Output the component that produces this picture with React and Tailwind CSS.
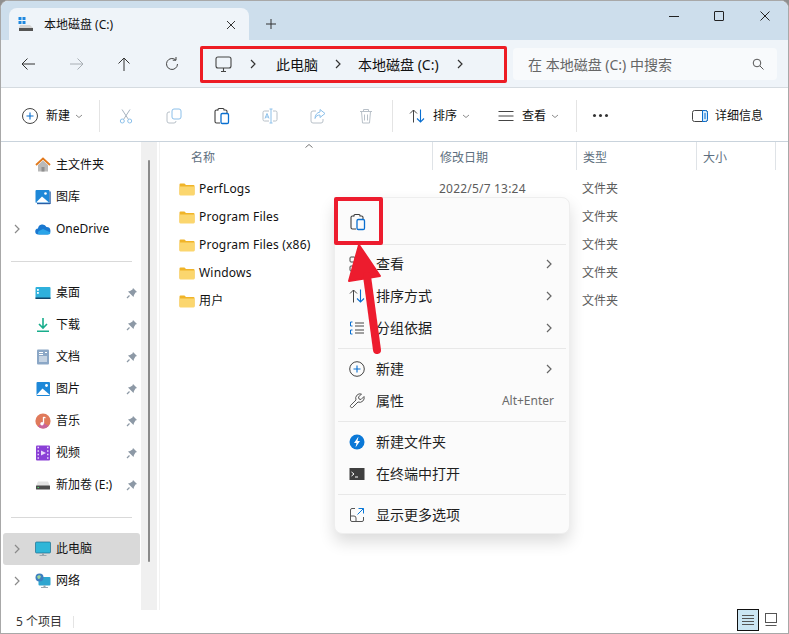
import React from "react";

const I = ({ s = 16, v = "0 0 16 16", c = "", children }) => (
  <svg width={s} height={s} viewBox={v} fill="none" className={"shrink-0 " + c}>{children}</svg>
);

const Folder = () => (
  <I s={16}>
    <path d="M0.5 3.5a1 1 0 0 1 1-1h4l1.5 1.5h7.5a1 1 0 0 1 1 1v8a1 1 0 0 1-1 1h-13a1 1 0 0 1-1-1z" fill="#f0b429" />
    <path d="M0.5 5.5h15v8a1 1 0 0 1-1 1h-13a1 1 0 0 1-1-1z" fill="#fbd66e" />
  </I>
);
const Chev = ({ c = "#8a8a8a" }) => (
  <I s={10} v="0 0 10 10"><path d="M3 1l4 4-4 4" stroke={c} strokeWidth="1.2" /></I>
);
const Down = () => (
  <I s={8} v="0 0 8 8"><path d="M1 3l3 2.5L7 3" stroke="#8c8c8c" strokeWidth="1" /></I>
);
const Pin = () => (
  <I s={12} v="0 0 12 12">
    <path d="M7 1l4 4-1.5.5L8 8 7.5 10 2 4.500 4 4l2.500-1.500z" fill="#8d99a6" />
    <path d="M3.500 8.500L1 11" stroke="#8d99a6" strokeWidth="1.2" />
  </I>
);
const Paste = ({ s = 18, dark = "#3c3c3c" }) => (
  <I s={s} v="0 0 18 18">
    <path d="M5 3H3.500A1.500 1.500 0 0 0 2 4.500v10A1.500 1.500 0 0 0 3.500 16H7" stroke={dark} strokeWidth="1.1" />
    <path d="M5 3.500V2.500A1 1 0 0 1 6 1.500h4a1 1 0 0 1 1 1v1M11 3h1.500A1.500 1.500 0 0 1 14 4.500V6" stroke={dark} strokeWidth="1.1" />
    <rect x="8" y="6.500" width="7.500" height="10" rx="1.300" stroke="#0a6fd0" strokeWidth="1.300" />
  </I>
);

const icons = {
  home: (
    <I>
      <path d="M1 8l7-6.500L15 8" stroke="#e2791c" strokeWidth="1.800" />
      <path d="M3 8l5-4.500L13 8v6.500H3z" fill="#b9b9b9" />
      <rect x="6.500" y="10" width="3" height="4.500" fill="#8f8f8f" />
    </I>
  ),
  gallery: (
    <I>
      <rect x="0.500" y="1" width="14" height="13" rx="1" fill="#1e88d8" />
      <rect x="14.500" y="2.500" width="1.200" height="12.500" fill="#2a5ea5" />
      <rect x="2" y="14" width="13" height="1.200" fill="#2a5ea5" />
      <path d="M1 13.500l6-6 7 6z" fill="#fff" />
      <circle cx="10.500" cy="4.500" r="1.300" fill="#fff" />
    </I>
  ),
  cloud: (
    <I>
      <path d="M3.500 13.500a3 3 0 0 1-.5-6A4.500 4.500 0 0 1 11.500 6a3.800 3.800 0 0 1 1 7.500z" fill="#1a78d0" />
      <path d="M4 13.500a2 2 0 0 1 0-3.500l4-2 7.500 3.500a2.200 2.200 0 0 1-2 2z" fill="#2aa4e8" />
    </I>
  ),
  desktop: (
    <I>
      <rect x="0.500" y="2" width="15" height="12" rx="1" fill="#2eb0dc" />
      <rect x="0.500" y="12.500" width="15" height="1.500" fill="#11466b" />
      <rect x="2" y="4" width="1.800" height="1.800" fill="#fff" />
      <rect x="2" y="7" width="1.800" height="1.800" fill="#fff" />
    </I>
  ),
  download: (
    <I>
      <path d="M8 1v9.500M4 7l4 4 4-4" stroke="#18ad8c" strokeWidth="1.600" />
      <rect x="2" y="13.500" width="12" height="1.500" fill="#18ad8c" />
    </I>
  ),
  docs: (
    <I>
      <rect x="2" y="0.500" width="12" height="15" rx="1" fill="#8ba7c6" />
      <path d="M4 3.500h4M4 5.500h4M10 3.500h2M4 8h8M4 10h8M4 12h8" stroke="#fff" strokeWidth="1" />
    </I>
  ),
  pics: (
    <I>
      <rect x="1.500" y="1" width="13.500" height="14" rx="1" fill="#1e88d8" />
      <path d="M1.500 14l6-6.500L15 14z" fill="#fff" />
      <circle cx="11.500" cy="4.500" r="1.400" fill="#fff" />
    </I>
  ),
  music: (
    <I>
      <circle cx="8" cy="8" r="7.600" fill="#e07a5b" />
      <path d="M8 8A7.600 7.600 0 0 0 14 12.600 7.600 7.600 0 0 1 3 13.600z" fill="#c9669a" />
      <path d="M8.500 4v6.500" stroke="#fff" strokeWidth="1.300" />
      <circle cx="7" cy="10.800" r="1.700" fill="#fff" />
      <path d="M8.500 4l2 1" stroke="#fff" strokeWidth="1.300" />
    </I>
  ),
  video: (
    <I>
      <rect x="1" y="0.500" width="14" height="15" rx="1" fill="#8a3fd6" />
      <path d="M6 5.500l5 2.500-5 2.500z" fill="#e8d8fa" />
      <path d="M2.500 2.500h1.500M2.500 6h1.500M2.500 9.500h1.500M2.500 13h1.500M12 2.500h1.500M12 6h1.500M12 9.500h1.500M12 13h1.500" stroke="#e8d8fa" strokeWidth="1.300" />
    </I>
  ),
  drive: (
    <I>
      <path d="M3 4.500h10l2 4.500H1z" fill="#e3e3e3" />
      <rect x="1" y="8.500" width="14" height="4" rx="0.500" fill="#4c4c4c" />
      <rect x="2.500" y="10" width="1.500" height="1" fill="#52d36a" />
    </I>
  ),
  pc: (
    <I>
      <rect x="0.500" y="1" width="15" height="11" rx="1" fill="#2fb6d8" stroke="#1d6f8f" strokeWidth="0.700" />
      <rect x="7" y="12" width="2" height="2" fill="#9aa7b0" />
      <rect x="4.500" y="14" width="7" height="1" fill="#9aa7b0" />
    </I>
  ),
  net: (
    <I>
      <rect x="3.500" y="4" width="12" height="8.500" rx="1" fill="#2fa6d0" />
      <rect x="8.500" y="12.500" width="2" height="2" fill="#9aa7b0" />
      <rect x="6" y="14" width="7" height="1" fill="#9aa7b0" />
      <circle cx="4.500" cy="4.500" r="4" fill="#3d7fc0" />
      <path d="M2 3.500l2-1.500 2 1-1 2.500-2 .5z" fill="#9cd59a" />
    </I>
  ),
};

const navTop = [["home", "主文件夹"], ["gallery", "图库"], ["cloud", "OneDrive", true]];
const navPinned = [["desktop", "桌面"], ["download", "下载"], ["docs", "文档"], ["pics", "图片"], ["music", "音乐"], ["video", "视频"], ["drive", "新加卷 (E:)"]];

const NavRow = ({ icon, label, chev, pin, active }) => (
  <div className={"h-8 flex items-center rounded-[3px] " + (active ? "bg-[#d9d9d9]" : "")}>
    <span className="w-[32px] pl-[9px] flex shrink-0">{chev && <Chev />}</span>
    {icons[icon]}
    <span className="ml-[5px] flex-1 text-[12px] text-[#111] whitespace-nowrap">{label}</span>
    {pin && <span className="mr-[2px] flex"><Pin /></span>}
  </div>
);

const Sep = () => <div className="h-px bg-[#d9d9d9] ml-[8px] mr-[8px]" />;

const files = [
  ["PerfLogs", "2022/5/7 13:24"],
  ["Program Files", ""],
  ["Program Files (x86)", ""],
  ["Windows", ""],
  ["用户", ""],
];

const Gray = ({ children }) => <span className="w-[48px] flex justify-center">{children}</span>;

const MenuItem = ({ icon, label, chev, hint }) => (
  <div className="h-8 flex items-center pl-[14px] pr-[15px]">
    <span className="w-[27px] flex shrink-0">{icon}</span>
    <span className="flex-1 text-[14px] text-[#1f1f1f] pb-[2px]">{label}</span>
    {chev && <Chev c="#666" />}
    {hint && <span className="text-[12px] text-[#6b6b6b]">{hint}</span>}
  </div>
);

const MSep = () => <div className="h-px bg-[#e8e8e8] mx-[3px]" />;

const marks = [
  [10, 60], [160, 50], [330, 50], [510, 60], [660, 55],
  [10, 190], [160, 175], [330, 190], [510, 180], [660, 185],
  [10, 320], [180, 310], [350, 320], [520, 300], [660, 320],
  [20, 460], [190, 450], [360, 440], [520, 440], [660, 450],
  [20, 570], [190, 570], [360, 570], [520, 570], [660, 570],
];

export default function App() {
  return (
    <div className="relative w-[789px] h-[634px] overflow-hidden bg-[#8f8f8f] font-['Noto_Sans','Noto_Sans_CJK_SC',sans-serif]">
      <div className="w-full h-full flex flex-col rounded-t-[8px] overflow-hidden bg-white border-l border-t border-r border-b border-[#a8a8a8]">
        {/* title bar */}
        <div className="h-[39px] shrink-0 bg-[#cddeec] flex items-end pl-[8px]">
          <div className="w-[240px] h-[32px] bg-[#eff4f9] rounded-t-[8px] flex items-center pl-[9px] pr-[13px] pt-[1px]">
            <I s={16}>
              <rect x="0.500" y="0" width="3" height="3" fill="#1e88e0" /><rect x="4.500" y="0" width="3" height="3" fill="#1e88e0" />
              <rect x="0.500" y="4" width="3" height="3" fill="#1e88e0" /><rect x="4.500" y="4" width="3" height="3" fill="#1e88e0" />
              <path d="M2 8h10l3 3v2H1v-2z" fill="#d4d4d4" />
              <rect x="1" y="11" width="14" height="3" fill="#555" />
            </I>
            <span className="ml-[10px] flex-1 text-[12px] text-[#111]">本地磁盘 (C:)</span>
            <I s={10} v="0 0 10 10"><path d="M1 1l8 8M9 1l-8 8" stroke="#333" strokeWidth="1" /></I>
          </div>
          <div className="h-[32px] ml-[16px] flex items-center">
            <I s={12} v="0 0 12 12"><path d="M6 1v10M1 6h10" stroke="#333" strokeWidth="1" /></I>
          </div>
          <div className="flex-1" />
          <div className="self-start flex items-center h-[30px] pr-[18px]">
            <span className="w-[10px] h-px bg-[#222] mr-[35px]" />
            <span className="w-[10px] h-[10px] border border-[#222] rounded-[1px] mr-[36px]" />
            <I s={10} v="0 0 10 10"><path d="M0.500 0.500l9 9M9.500 0.500l-9 9" stroke="#222" strokeWidth="1" /></I>
          </div>
        </div>
        {/* address */}
        <div className="h-[48px] shrink-0 bg-[#eff4f9] border-b border-[#d5dbe0] flex items-center pt-[1px]">
          <div className="flex items-center w-[199px] shrink-0">
            <span className="w-[53px] pl-[19px] flex">
              <I><path d="M15 8H2M7.500 2.500L2 8l5.500 5.500" stroke="#333" strokeWidth="1" /></I>
            </span>
            <span className="w-[47px] pl-[15px] flex">
              <I><path d="M1 8h13M8.500 2.500L14 8l-5.500 5.500" stroke="#a8aeb4" strokeWidth="1" /></I>
            </span>
            <span className="w-[48px] pl-[15px] flex">
              <I><path d="M8 15V2M2.500 7.500L8 2l5.500 5.500" stroke="#333" strokeWidth="1" /></I>
            </span>
            <span className="w-[48px] pl-[15px] flex">
              <I><path d="M13.500 8a5.500 5.500 0 1 1-1.700-4M12 1v3.200H8.800" stroke="#444" strokeWidth="1" /></I>
            </span>
          </div>
          <div className="w-[307px] h-[37px] shrink-0 border-[3px] border-[#ed1c24] rounded-[2px] flex items-center pl-[12px] text-[14px] text-[#111]">
            <I s={17} v="0 0 17 17"><rect x="1" y="1" width="15" height="11" rx="2" stroke="#444" strokeWidth="1.100" /><path d="M6 15.500h5M8.500 12v3" stroke="#444" strokeWidth="1.100" /></I>
            <span className="ml-[16px] flex"><Chev c="#333" /></span>
            <span className="ml-[18px]">此电脑</span>
            <span className="ml-[15px] flex"><Chev c="#333" /></span>
            <span className="ml-[15px] whitespace-nowrap">本地磁盘 (C:)</span>
            <span className="ml-[16px] flex"><Chev c="#333" /></span>
          </div>
          <div className="ml-[6px] w-[264px] h-[32px] bg-[#f8fafc] rounded-[4px] flex items-center pl-[15px] pr-[13px]">
            <span className="flex-1 text-[14px] text-[#666]">在 本地磁盘 (C:) 中搜索</span>
            <I s={12} v="0 0 12 12"><circle cx="5" cy="5" r="3.800" stroke="#555" strokeWidth="1" /><path d="M8 8l3.500 3.500" stroke="#555" strokeWidth="1" /></I>
          </div>
        </div>
        {/* toolbar */}
        <div className="h-[54px] shrink-0 bg-white border-b border-[#c9d3dc] flex items-center pt-[2px]">
          <div className="w-[98px] pl-[21px] flex items-center shrink-0">
            <I s={16}><circle cx="8" cy="8" r="7.500" stroke="#444" strokeWidth="1" /><path d="M8 4.500v7M4.500 8h7" stroke="#0a6fd0" strokeWidth="1.100" /></I>
            <span className="ml-[8px] text-[12px] text-[#111]">新建</span>
            <span className="ml-[5px] flex"><Down /></span>
          </div>
          <span className="w-px h-[32px] bg-[#e4e4e4] mr-[2px] shrink-0" />
          <Gray>
            <I><path d="M4 1.500l6.500 10M12 1.500L5.500 11.500" stroke="#a8b4c0" strokeWidth="1" /><circle cx="4.300" cy="13" r="2" stroke="#8cc0ea" /><circle cx="11.700" cy="13" r="2" stroke="#8cc0ea" /></I>
          </Gray>
          <Gray>
            <I><rect x="6" y="1" width="9" height="10" rx="2" stroke="#8cc0ea" /><path d="M4 4H3a2 2 0 0 0-2 2v7a2 2 0 0 0 2 2h5a2 2 0 0 0 2-2" stroke="#b8c0c8" /></I>
          </Gray>
          <Gray><Paste s={18} /></Gray>
          <Gray>
            <I><path d="M7 3H2.500A1.500 1.500 0 0 0 1 4.500v7A1.500 1.500 0 0 0 2.500 13H7M11 3h2.500A1.500 1.500 0 0 1 15 4.500v7a1.500 1.500 0 0 1-1.500 1.500H11" stroke="#b8c0c8" /><path d="M7.500 1h3M9 1v14M7.500 15h3" stroke="#8cc0ea" /><path d="M3 10.500l2-5 2 5M3.700 9h2.600" stroke="#8cc0ea" /></I>
          </Gray>
          <Gray>
            <I><path d="M6 3H3a2 2 0 0 0-2 2v8a2 2 0 0 0 2 2h8a2 2 0 0 0 2-2v-2" stroke="#b8c0c8" /><path d="M10 1.500l5 4-5 4V7C7.500 7 6 8 5 10.500 5 7 7 4.500 10 4z" stroke="#8cc0ea" /></I>
          </Gray>
          <Gray>
            <I><path d="M2 3.500h12M5.500 3.500V1.500h5v2M3.500 3.500L4.500 15h7l1-11.500M6.500 6.500v6M9.500 6.500v6" stroke="#b8c0c8" /></I>
          </Gray>
          <span className="w-px h-[32px] bg-[#e4e4e4] ml-[2px] shrink-0" />
          <div className="ml-[16px] flex items-center">
            <I><path d="M4.500 14.500V2M1 5.500L4.500 2 8 5.500" stroke="#444" strokeWidth="1" /><path d="M11.500 1.500V14M8 10.500l3.500 3.500 3.500-3.500" stroke="#0a6fd0" strokeWidth="1.100" /></I>
            <span className="ml-[8px] text-[12px] text-[#111]">排序</span>
            <span className="ml-[5px] flex"><Down /></span>
          </div>
          <div className="ml-[28px] flex items-center">
            <I><path d="M0.500 3.500h15M0.500 8h15M0.500 12.500h15" stroke="#444" strokeWidth="1" /></I>
            <span className="ml-[8px] text-[12px] text-[#111]">查看</span>
            <span className="ml-[5px] flex"><Down /></span>
          </div>
          <span className="w-px h-[32px] bg-[#e4e4e4] ml-[17px] shrink-0" />
          <div className="ml-[16px] flex gap-[3px] items-center">
            <span className="w-[3px] h-[3px] rounded-full bg-[#333]" />
            <span className="w-[3px] h-[3px] rounded-full bg-[#333]" />
            <span className="w-[3px] h-[3px] rounded-full bg-[#333]" />
          </div>
          <div className="ml-auto pr-[25px] flex items-center">
            <I><rect x="0.500" y="2.500" width="15" height="11" rx="2" stroke="#444" strokeWidth="1" /><path d="M10.500 2.500h3a2 2 0 0 1 2 2v7a2 2 0 0 1-2 2h-3z" fill="#d7ebfa" stroke="#0a6fd0" /><path d="M12 6h2M12 8h2M12 10h2" stroke="#0a6fd0" /></I>
            <span className="ml-[7px] text-[12px] text-[#111]">详细信息</span>
          </div>
        </div>
        {/* main */}
        <div className="flex-1 flex min-h-0 bg-white">
          <div className="w-[140px] shrink-0 pt-[7px] pl-[2px] pr-[1px]">
            {navTop.map(([i, l, c]) => <NavRow key={l} icon={i} label={l} chev={c} />)}
            <div className="h-[32px] flex items-center"><div className="flex-1"><Sep /></div></div>
            {navPinned.map(([i, l]) => <NavRow key={l} icon={i} label={l} pin />)}
            <div className="h-[32px] flex items-center"><div className="flex-1"><Sep /></div></div>
            <NavRow icon="pc" label="此电脑" chev active />
            <NavRow icon="net" label="网络" chev />
          </div>
          <div className="w-[16px] shrink-0 bg-[#f0f0f0] relative">
            <div className="absolute left-[7px] top-[18px] w-[2px] h-[402px] bg-[#8a8a8a] rounded-full" />
          </div>
          <div className="flex-1 min-w-0 border-l border-[#f2f2f2] ml-[2px]">
            <div className="h-[33px] flex text-[12px] text-[#5e6f80] relative">
              <span className="w-[272px] pl-[31px] pt-[7px] shrink-0">名称</span>
              <span className="w-[144px] pl-[7px] pt-[7px] shrink-0 h-[28px] border-l border-[#dfe3e7]">修改日期</span>
              <span className="w-[120px] pl-[6px] pt-[7px] shrink-0 h-[28px] border-l border-[#dfe3e7]">类型</span>
              <span className="w-[80px] pl-[6px] pt-[7px] shrink-0 h-[28px] border-x border-[#dfe3e7]">大小</span>
              <span className="absolute left-[144px] top-0"><I s={10} v="0 0 10 10"><path d="M1.500 5.500L5 2.500l3.500 3" stroke="#777" strokeWidth="1" /></I></span>
            </div>
            {files.map(([n, d]) => (
              <div key={n} className="h-[28px] flex items-center text-[12px] text-[#111]">
                <span className="w-[272px] pl-[19px] flex items-center shrink-0">
                  <Folder />
                  <span className="ml-[4px] whitespace-nowrap tracking-[0.2px]">{n}</span>
                </span>
                <span className="w-[144px] pl-[7px] shrink-0 text-[#5c5c5c] whitespace-nowrap tracking-[0.2px]">{d}</span>
                <span className="pl-[6px] text-[#5c5c5c]">文件夹</span>
              </div>
            ))}
          </div>
        </div>
        {/* status */}
        <div className="h-[23px] shrink-0 bg-white flex items-center pl-[15px] pr-[10px] relative">
          <span className="text-[12px] text-[#333]">5 个项目</span>
          <span className="ml-[11px] w-px h-[12px] bg-[#e4e4e4]" />
          <div className="ml-auto flex items-center gap-[5px] self-start -mt-px">
            <span className="w-[22px] h-[22px] bg-[#cbe6f4] border border-[#111] flex items-center justify-center">
              <I s={14} v="0 0 14 14"><path d="M1 2.500h12M1 5.500h12M1 8.500h12M1 11.500h12" stroke="#555" strokeWidth="1" /></I>
            </span>
            <I s={14} v="0 0 14 14"><rect x="1.500" y="0.500" width="11" height="9" stroke="#555" /><path d="M1.500 12.500h11" stroke="#555" /></I>
          </div>
        </div>
      </div>

      {/* context menu */}
      <div className="absolute left-[334px] top-[197px] w-[236px] h-[337px] bg-[#fbfbfb] rounded-[8px] border border-[#eeeeee] shadow-[0_8px_16px_rgba(0,0,0,0.14)]">
        <div className="h-[46px] flex items-center pl-[14px] pt-[2px]"><Paste /></div>
        <MSep />
        <div className="h-[3px]" />
        <MenuItem label="查看" chev icon={<I><rect x="1" y="1" width="5" height="5" rx="1" stroke="#444" /><rect x="1" y="10" width="5" height="5" rx="1" stroke="#444" /><rect x="10" y="10" width="5" height="5" rx="1" stroke="#0a6fd0" /></I>} />
        <MenuItem label="排序方式" chev icon={<I><path d="M4.500 14.500V2M1 5.500L4.500 2 8 5.500" stroke="#444" strokeWidth="1" /><path d="M11.500 1.500V14M8 10.500l3.500 3.500 3.500-3.500" stroke="#0a6fd0" strokeWidth="1.100" /></I>} />
        <MenuItem label="分组依据" chev icon={<I><path d="M3.500 2H1.500v4h2M3.500 10H1.500v4h2" stroke="#0a6fd0" /><path d="M6 3h9M6 6h9M6 10h9M6 13h9" stroke="#444" /></I>} />
        <div className="h-[4px]" />
        <MSep />
        <div className="h-[4px]" />
        <MenuItem label="新建" chev icon={<I><circle cx="8" cy="8" r="7.300" stroke="#444" strokeWidth="1" /><path d="M8 4.500v7M4.500 8h7" stroke="#0a6fd0" strokeWidth="1.100" /></I>} />
        <MenuItem label="属性" hint="Alt+Enter" icon={<I><path d="M15 3.500l-3 3-2-.5-.5-2 3-3a4.500 4.500 0 0 0-5.500 6L1.500 12.500a1.500 1.500 0 0 0 2 2L9 9a4.500 4.500 0 0 0 6-5.500z" stroke="#555" strokeWidth="1" /></I>} />
        <div className="h-[4px]" />
        <MSep />
        <div className="h-[4px]" />
        <MenuItem label="新建文件夹" icon={<I><circle cx="8" cy="8" r="7.500" fill="#0a78d7" /><path d="M9.500 2.500L5 9h2.500L6.500 13.500 11 7H8.500z" fill="#fff" /></I>} />
        <MenuItem label="在终端中打开" icon={<I><rect x="0.500" y="2" width="15" height="12" fill="#3f3f3f" /><path d="M2.500 6l2.500 2-2.500 2M6 11h3" stroke="#fff" strokeWidth="1" /></I>} />
        <div className="h-[4px]" />
        <MSep />
        <div className="h-[4px]" />
        <MenuItem label="显示更多选项" icon={<I><path d="M6 1.500H3A1.500 1.500 0 0 0 1.500 3v10A1.500 1.500 0 0 0 3 14.500h10a1.500 1.500 0 0 0 1.500-1.500v-3M1.500 9H5a2 2 0 0 1 2 2v3.500" stroke="#555" /><path d="M9.500 1.500h5v5M14.500 1.500L8.500 7.500" stroke="#0a78d7" /></I>} />
      </div>

      {/* red annotations */}
      <div className="absolute left-[334px] top-[197px] w-[49px] h-[48px] border-[4px] border-[#ed1c2e] rounded-[2px]" />
      <svg className="absolute left-[340px] top-[240px]" width="50" height="120" viewBox="0 0 50 120" fill="none">
        <path d="M19 5L9 41 40 36z" fill="#ed1c2e" stroke="#ed1c2e" strokeWidth="2" strokeLinejoin="round" />
        <path d="M27 36L37 110" stroke="#ed1c2e" strokeWidth="8" strokeLinecap="round" />
      </svg>

      {/* watermark */}
      {marks.map(([x, y]) => (
        <span
          key={x + "-" + y}
          className="absolute rotate-[28deg] italic font-bold text-[26px] tracking-[2px] text-[rgba(0,0,0,0.025)] pointer-events-none whitespace-nowrap"
          style={{ left: x, top: y }}
        >
          rjtx.com
        </span>
      ))}
    </div>
  );
}
